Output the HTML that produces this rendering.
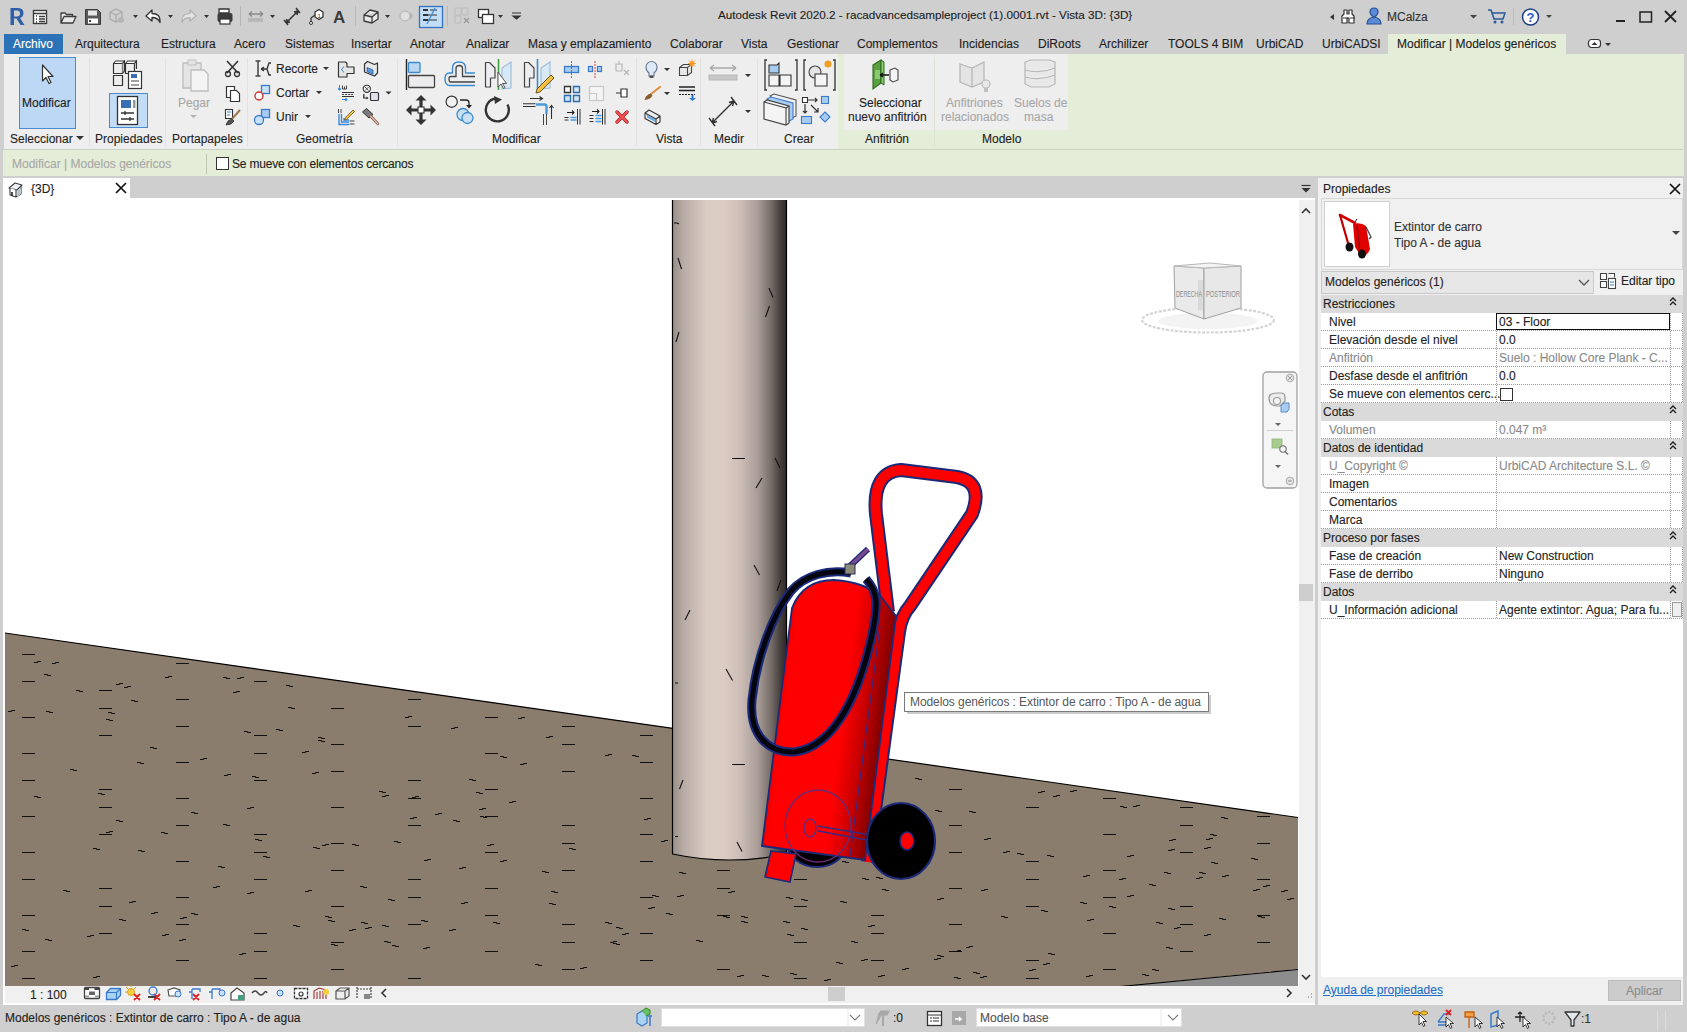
<!DOCTYPE html>
<html><head><meta charset="utf-8"><style>
*{margin:0;padding:0;box-sizing:border-box}
html,body{width:1687px;height:1032px;overflow:hidden}
body{position:relative;background:#CFCFCF;font-family:"Liberation Sans",sans-serif;font-size:12px;color:#1E1E1E}
.a{position:absolute}
.t{position:absolute;white-space:nowrap;line-height:14px;-webkit-text-stroke:0.12px currentColor}
svg{position:absolute;overflow:visible}
</style></head><body>
<!-- chrome backgrounds -->
<div class="a" style="left:4px;top:34px;width:59px;height:20px;background:#2B73B6"></div>
<div class="a" style="left:1388px;top:34px;width:178px;height:20px;background:#E4EDD7"></div>
<div class="a" style="left:4px;top:54px;width:1680px;height:96px;background:#E4EDD7"></div>
<div class="a" style="left:4px;top:54px;width:834px;height:95px;background:#EEEEEE"></div>
<div class="a" style="left:844px;top:54px;width:90px;height:76px;background:#EEEEEE"></div>
<div class="a" style="left:935px;top:54px;width:133px;height:76px;background:#EEEEEE"></div>
<div class="a" style="left:934px;top:58px;width:1px;height:88px;background:#DCE4D2"></div>
<div class="a" style="left:4px;top:149px;width:1679px;height:1px;background:#CAD3C0"></div>
<div class="a" style="left:3px;top:150px;width:1681px;height:26px;background:#E4EDD7"></div>
<div class="a" style="left:3px;top:178px;width:127px;height:21px;background:#FFFFFF"></div>
<div class="a" style="left:3px;top:198px;width:1315px;height:807px;background:#FFFFFF"></div>
<div class="a" style="left:1299px;top:200px;width:16px;height:786px;background:#F0F0F0"></div>
<div class="a" style="left:5px;top:986px;width:1310px;height:17px;background:#F0F0F0"></div>
<div class="a" style="left:1318px;top:178px;width:365px;height:827px;background:#F0F0F0"></div>
<!-- TITLE BAR -->
<div class="t" style="left:718px;top:8px;font-size:11.7px;color:#1E1E1E">Autodesk Revit 2020.2 - racadvancedsampleproject (1).0001.rvt - Vista 3D: {3D}</div>
<svg width="1687" height="32" style="left:0;top:0">
<!-- R logo -->
<path d="M10.5 8 h7 q6 0 6 5 q0 4 -3.5 5 l4.5 7 h-4 l-4 -6.5 h-2.5 v6.5 h-3.5 Z M14 10.5 v6 h3 q3 0 3 -3 q0 -3 -3 -3 Z" fill="#2F5FA8"/>
<!-- properties icon -->
<rect x="33.5" y="10.5" width="13" height="13" fill="#fff" stroke="#3C3C3C" stroke-width="1.4"/>
<path d="M34 13.5 h12 M37 16 h-1 M37 19 h-1 M37 22 h-1 M39 16.5 h6 M39 19 h6 M39 21.5 h6" stroke="#3C3C3C" stroke-width="1.3"/>
<!-- open folder -->
<path d="M61 23 v-10 h4 l1.5 1.5 h6 v2 M61 23 l3 -6.5 h12 l-3 6.5 Z" fill="#E8E8E8" stroke="#3C3C3C" stroke-width="1.3" stroke-linejoin="round"/>
<!-- save -->
<path d="M85.5 9.5 h12 l3 3 v12 h-15 Z" fill="#5A5A5A" stroke="#3C3C3C"/>
<rect x="88" y="10.5" width="9" height="5" fill="#E8E8E8"/>
<rect x="88" y="18.5" width="10" height="5" fill="#fff"/>
<rect x="89" y="20" width="2" height="2" fill="#3C3C3C"/>
<!-- sync (disabled) -->
<path d="M110 12 l6 -3 l6 3 v7 l-6 3 l-6 -3 Z M110 12 l6 3 l6 -3 M116 15 v7" fill="none" stroke="#AAAAAA" stroke-width="1.3"/>
<circle cx="121" cy="20" r="3" fill="#B5B5B5"/>
<path d="M133 15 h5 l-2.5 3 Z M168 15 h5 l-2.5 3 Z M204 15 h5 l-2.5 3 Z M270 15 h5 l-2.5 3 Z M385 15 h5 l-2.5 3 Z M498 15 h5 l-2.5 3 Z" fill="#333"/>
<!-- undo -->
<path d="M146 16 l6 -6 v3.5 q8 0 8 7 v2 q-2 -5 -8 -5 v3.5 Z" fill="#fff" stroke="#333" stroke-width="1.3" stroke-linejoin="round"/>
<!-- redo (disabled) -->
<path d="M196 16 l-6 -6 v3.5 q-8 0 -8 7 v2 q2 -5 8 -5 v3.5 Z" fill="#E4E4E4" stroke="#B0B0B0" stroke-width="1.2" stroke-linejoin="round"/>
<!-- print -->
<path d="M219 9 h10 v4 h-10 Z" fill="#fff" stroke="#333" stroke-width="1.3"/>
<rect x="217.5" y="13" width="15" height="9" rx="2" fill="#3C3C3C"/>
<rect x="220" y="19" width="10" height="5" fill="#fff" stroke="#333" stroke-width="1.2"/>
<path d="M240.5 6 v20 M355.5 6 v20 M447.5 6 v20" stroke="#B8B8B8"/>
<!-- measure -->
<path d="M249 14 h14 M249 14 l3 -2.5 M249 14 l3 2.5 M263 14 l-3 -2.5 M263 14 l-3 2.5" stroke="#8A8A8A" stroke-width="1.3" fill="none"/>
<rect x="248" y="18" width="15" height="4" fill="#B8B8B8"/>
<!-- aligned dim -->
<path d="M286 23 l12 -12 M286 23 l1 -4 M286 23 l4 -1 M298 11 l-4 1 M298 11 l-1 4 M284 20 l4 5 M296 8 l4 5" stroke="#333" stroke-width="1.5" fill="none"/>
<!-- tag -->
<path d="M311 23 v-5 l4 -3" stroke="#333" stroke-width="1.3" fill="none"/>
<circle cx="311" cy="23" r="1.5" fill="#fff" stroke="#333"/>
<path d="M315 12 l4 -2.5 l4 2.5 v5 l-4 2.5 l-4 -2.5 Z" fill="#fff" stroke="#333" stroke-width="1.3"/>
<text x="317.5" y="17.5" font-size="6" font-family="Liberation Sans" fill="#333">1</text>
<!-- A -->
<text x="333" y="23" font-size="17" font-weight="bold" font-family="Liberation Sans" fill="#3C3C3C">A</text>
<!-- house -->
<path d="M364 15 l6 -5 l8 2 v7 l-6 4 l-8 -2 Z M364 15 l8 2 l6 -5 M372 17 v6" fill="#E8E8E8" stroke="#3C3C3C" stroke-width="1.3" stroke-linejoin="round"/>
<!-- section -->
<circle cx="405" cy="16" r="5" fill="#E0E0E0" stroke="#B0B0B0"/>
<path d="M410 12 l3 4 l-3 4 Z" fill="#B0B0B0"/>
<!-- thin lines highlighted -->
<rect x="419.5" y="6.5" width="23" height="21" fill="#C2DDF7" stroke="#3573C0" stroke-width="1.3"/>
<path d="M423 10 h5 M423 15 h5 M423 20 h5" stroke="#333" stroke-width="2"/>
<path d="M430 10 h7 M428 15 h9 M427 20 h10" stroke="#333" stroke-width="1"/>
<path d="M427 24 l8 -16" stroke="#3A8CE0" stroke-width="1.3"/>
<!-- close hidden -->
<path d="M455 8 h6 v7 h-6 Z M462 8 h6 v7 h-6 Z M455 16 h6 v7 h-6 Z" fill="none" stroke="#BBBBBB"/>
<path d="M464 18 l5 5 M469 18 l-5 5" stroke="#9A9A9A" stroke-width="1.4"/>
<!-- switch windows -->
<rect x="478.5" y="9.5" width="10" height="8" fill="#fff" stroke="#333" stroke-width="1.3"/>
<rect x="482.5" y="14.5" width="11" height="9" fill="#fff" stroke="#333" stroke-width="1.3"/>
<path d="M512 13 h9 M513 16 h7 l-3.5 3 Z" stroke="#333" stroke-width="1.2" fill="#333"/>
<!-- right side -->
<path d="M1334 14 l-4 3 l4 3 Z" fill="#333"/>
<path d="M1344 10 h3 v4 h2 v-4 h3 v4 l2 2 v7 h-5 v-5 h-2 v5 h-5 v-7 l2 -2 Z" fill="#fff" stroke="#333" stroke-width="1.2" stroke-linejoin="round"/>
<path d="M1343 18 h5 M1350 18 h5" stroke="#333" stroke-width="1"/>
<path d="M1367 24 q0 -6 7 -7 q-4 -2 -4 -5 q0 -4 4 -4 q4 0 4 4 q0 3 -4 5 q7 1 7 7 Z" fill="#5B8BD8" stroke="#2A4E90" stroke-width="1.2"/>
<path d="M1470 15 h7 l-3.5 3.5 Z M1546 15 h6 l-3 3 Z" fill="#444"/>
<path d="M1488 10 h3 l3 9 h9 l2 -6 h-13" fill="none" stroke="#2A5A9A" stroke-width="1.5"/>
<circle cx="1495" cy="22" r="1.5" fill="#2A5A9A"/><circle cx="1502" cy="22" r="1.5" fill="#2A5A9A"/>
<path d="M1513.5 8 v17" stroke="#BBBBBB"/>
<circle cx="1530.5" cy="17" r="8" fill="#fff" stroke="#1E3E80" stroke-width="1.5"/>
<text x="1526.5" y="22" font-size="13" font-weight="bold" font-family="Liberation Sans" fill="#2A5AC0">?</text>
<path d="M1616 21 h9" stroke="#222" stroke-width="2"/>
<rect x="1640" y="12" width="11.5" height="10" fill="none" stroke="#222" stroke-width="1.5"/>
<path d="M1665 11 l11 11 M1676 11 l-11 11" stroke="#222" stroke-width="1.8"/>
</svg>
<div class="t" style="left:1387px;top:10px;color:#333">MCalza</div>
<!-- TABS -->
<div class="t" style="left:13px;top:37px;color:#fff">Archivo</div>
<div class="t" style="left:75px;top:37px">Arquitectura</div>
<div class="t" style="left:161px;top:37px">Estructura</div>
<div class="t" style="left:234px;top:37px">Acero</div>
<div class="t" style="left:285px;top:37px">Sistemas</div>
<div class="t" style="left:351px;top:37px">Insertar</div>
<div class="t" style="left:410px;top:37px">Anotar</div>
<div class="t" style="left:466px;top:37px">Analizar</div>
<div class="t" style="left:528px;top:37px">Masa y emplazamiento</div>
<div class="t" style="left:670px;top:37px">Colaborar</div>
<div class="t" style="left:741px;top:37px">Vista</div>
<div class="t" style="left:787px;top:37px">Gestionar</div>
<div class="t" style="left:857px;top:37px">Complementos</div>
<div class="t" style="left:959px;top:37px">Incidencias</div>
<div class="t" style="left:1038px;top:37px">DiRoots</div>
<div class="t" style="left:1099px;top:37px">Archilizer</div>
<div class="t" style="left:1168px;top:37px">TOOLS 4 BIM</div>
<div class="t" style="left:1256px;top:37px">UrbiCAD</div>
<div class="t" style="left:1322px;top:37px">UrbiCADSI</div>
<div class="t" style="left:1397px;top:37px">Modificar | Modelos genéricos</div>
<svg width="40" height="20" style="left:1580px;top:34px">
<rect x="8.5" y="5.5" width="12" height="8" rx="3" fill="#fff" stroke="#333" stroke-width="1.2"/>
<path d="M11.5 11 l3 -3 l3 3 Z M25 9 h6 l-3 3 Z" fill="#333"/>
</svg>
<!-- RIBBON -->
<div class="a" style="left:19px;top:57px;width:57px;height:72px;background:#BCD8F4;border:1px solid #4A8BD0"></div>
<div class="a" style="left:109px;top:93px;width:39px;height:35px;background:#C4DDF6;border:1px solid #4A8BD0"></div>
<div class="t" style="left:22px;top:96px">Modificar</div>
<div class="t" style="left:10px;top:132px">Seleccionar</div>
<div class="t" style="left:95px;top:132px">Propiedades</div>
<div class="t" style="left:178px;top:96px;color:#A8A8A8">Pegar</div>
<div class="t" style="left:172px;top:132px">Portapapeles</div>
<div class="t" style="left:276px;top:62px">Recorte</div>
<div class="t" style="left:276px;top:86px">Cortar</div>
<div class="t" style="left:276px;top:110px">Unir</div>
<div class="t" style="left:296px;top:132px">Geometría</div>
<div class="t" style="left:492px;top:132px">Modificar</div>
<div class="t" style="left:656px;top:132px">Vista</div>
<div class="t" style="left:714px;top:132px">Medir</div>
<div class="t" style="left:784px;top:132px">Crear</div>
<div class="t" style="left:859px;top:96px">Seleccionar</div>
<div class="t" style="left:848px;top:110px">nuevo anfitrión</div>
<div class="t" style="left:865px;top:132px">Anfitrión</div>
<div class="t" style="left:946px;top:96px;color:#A8A8A8">Anfitriones</div>
<div class="t" style="left:941px;top:110px;color:#A8A8A8">relacionados</div>
<div class="t" style="left:1014px;top:96px;color:#A8A8A8">Suelos de</div>
<div class="t" style="left:1024px;top:110px;color:#A8A8A8">masa</div>
<div class="t" style="left:982px;top:132px">Modelo</div>
<svg width="1687" height="180" style="left:0;top:0">
<!-- panel separators -->
<path d="M89.5 58 v88 M165.5 58 v88 M247.5 58 v88 M397.5 58 v88 M636.5 58 v88 M700.5 58 v88 M757.5 58 v88" stroke="#E2E2E2" stroke-width="1"/>
<path d="M76 136 h8 l-4 4 Z" fill="#333"/>
<!-- cursor -->
<path d="M42.5 65 v16 l3.5 -3.5 l3 6 l2 -1 l-3 -6 h5 Z" fill="#fff" stroke="#333" stroke-width="1.2" stroke-linejoin="round"/>
<!-- type properties icon -->
<path d="M113.5 63.5 l2 -2.5 h9 l-2 2.5 Z M125.5 63.5 l2 -2.5 h9 l-2 2.5 Z" fill="#FFFFFF" stroke="#333" stroke-width="1.1" stroke-linejoin="round"/>
<path d="M113.5 63.5 h9 v10 h-9 Z M125.5 63.5 h9 v10 h-9 Z M113.5 75.5 h9 v10 h-9 Z" fill="#EDEDED" stroke="#333" stroke-width="1.2" stroke-linejoin="round"/>
<path d="M122.5 63.5 l2 -2.5 v10 l-2 2.5 M134.5 63.5 l2 -2.5 v8" fill="#C8C8C8" stroke="#333" stroke-width="1.1"/>
<rect x="128.5" y="71.5" width="13" height="17" fill="#fff" stroke="#333" stroke-width="1.2"/>
<rect x="131" y="74" width="6" height="4" fill="#3A6EB0"/>
<path d="M131 81 h8 M131 85 h8" stroke="#444" stroke-width="1"/>
<!-- instance properties -->
<rect x="117.5" y="96.5" width="20" height="28" fill="#fff" stroke="#333" stroke-width="1.3"/>
<rect x="121" y="100" width="10" height="8" fill="#3A6EB0"/>
<rect x="133" y="100" width="2.5" height="8" fill="#999"/>
<path d="M121 113 h13 M121 119 h13 M125 111 v4 M130 117 v4" stroke="#333" stroke-width="1.3"/>
<!-- paste disabled -->
<path d="M183 63 h18 v25 h-18 Z" fill="#E4E4E4" stroke="#BDBDBD" stroke-width="1.3"/>
<path d="M188 60 h8 v5 h-8 Z" fill="#E4E4E4" stroke="#BDBDBD"/>
<path d="M191 70 h13 l4 4 v17 h-17 Z" fill="#F4F4F4" stroke="#BDBDBD" stroke-width="1.3"/>
<path d="M190 115 h7 l-3.5 3 Z" fill="#B0B0B0"/>
<!-- cut copy match -->
<path d="M227 61 l11 12 M238 61 l-11 12" stroke="#333" stroke-width="1.6"/>
<circle cx="228" cy="74" r="2.5" fill="none" stroke="#333" stroke-width="1.3"/><circle cx="237" cy="74" r="2.5" fill="none" stroke="#333" stroke-width="1.3"/>
<path d="M226.5 86.5 h8 v11 h-8 Z" fill="#fff" stroke="#333" stroke-width="1.2"/>
<path d="M230.5 90.5 h6 l3 3 v8 h-9 Z" fill="#fff" stroke="#333" stroke-width="1.2"/>
<rect x="225.5" y="109.5" width="7" height="9" fill="#fff" stroke="#333" stroke-width="1.1"/>
<path d="M227 112 h4 M227 115 h3" stroke="#3A7ACB" stroke-width="1"/>
<path d="M232 119 l8 -9" stroke="#A07850" stroke-width="2"/>
<path d="M226 125 q1 -5 6 -6 l2 2 q-2 4 -8 4 Z" fill="#555" stroke="#333" stroke-width="0.8"/>
<!-- Geometria icons -->
<path d="M255.5 61 h5 M255.5 76 h5 M258 61 v15" stroke="#444" stroke-width="1.5" fill="none"/>
<path d="M261 69 h6 l2 -6 h2 M267 69 l2 6 h2 M261 69 l3 -2 M261 69 l3 2" stroke="#333" stroke-width="1.3" fill="none"/>
<path d="M323 67 h6 l-3 3 Z M316 91 h6 l-3 3 Z M305 115 h6 l-3 3 Z" fill="#333"/>
<rect x="261.5" y="85.5" width="8" height="8" fill="#C8E0F8" stroke="#3A7ACB" stroke-width="1.3"/>
<circle cx="259" cy="96" r="4" fill="#fff" stroke="#D03030" stroke-width="1.4"/>
<rect x="261.5" y="109.5" width="8" height="8" fill="#A8CCF0" stroke="#3A7ACB" stroke-width="1.3"/>
<circle cx="259" cy="120" r="4.5" fill="#C8E0F8" stroke="#3A7ACB" stroke-width="1.3"/>
<path d="M338.5 62 h7 l1.5 1.5 v3.5 h7 v6.5 h-7 v3.5 h-8.5 Z" fill="#E6E6E6" stroke="#333" stroke-width="1.2" stroke-linejoin="round"/>
<path d="M344 66.5 l-2.5 3 l2.5 3" stroke="#5A9AD0" stroke-width="1.1" fill="none"/>
<path d="M364.5 64 l3 -2.5 l7 3 l3 -1.5 v10 l-3 3 l-10 -4 Z" fill="#E8E8E8" stroke="#333" stroke-width="1.2" stroke-linejoin="round"/>
<path d="M367 67.5 l6 2.5 v4 l-6 -2.5 Z" fill="#5A9AE0" stroke="#2A5AA0" stroke-width="0.8"/>
<path d="M339.5 85 v5 M338 88.5 l1.5 1.5 l1.5 -1.5" stroke="#3A8AE0" stroke-width="1.1" fill="none"/>
<path d="M342.5 85.5 v3.5 h4 v-3.5 M344.5 86.5 v2.5" stroke="#333" stroke-width="0.9" fill="none"/>
<path d="M342 92.5 h12 M342 96.5 h12" stroke="#333" stroke-width="1.1"/>
<path d="M342 94.5 h12" stroke="#333" stroke-width="0.9" stroke-dasharray="2 1"/>
<path d="M342 99.5 h5 M345.5 98 l1.5 1.5 l-1.5 1.5" stroke="#3A8AE0" stroke-width="1.1" fill="none"/>
<circle cx="366.8" cy="88.8" r="3.6" fill="#F4F4F4" stroke="#333" stroke-width="1.1"/>
<path d="M365 87 l3.6 3.6 M368.6 87 l-3.6 3.6" stroke="#333" stroke-width="0.8"/>
<path d="M363.8 94 v4 h3" stroke="#222" stroke-width="1.2" fill="none"/>
<path d="M366.5 96.5 l2 1.5 l-2 1.5 Z" fill="#222"/>
<rect x="370.5" y="92.5" width="8" height="8" rx="1" fill="#E0E0E6" stroke="#333" stroke-width="1.1"/>
<path d="M338.5 109 v4 M341 109 v4" stroke="#444" stroke-width="1"/>
<path d="M339 114 v10.5 h10 M341.5 114 v8 h7.5 M344 118 v2 h5" stroke="#3A8AE0" stroke-width="1.4" fill="none"/>
<path d="M349.5 121 h5 M349.5 124 h5" stroke="#444" stroke-width="1"/>
<path d="M345 118 l8 -8 l1.5 1.5 l-8 8 l-2 0.5 Z" fill="#F4C040" stroke="#6A5020" stroke-width="0.8"/>
<path d="M362.5 112 l4 -3.5 l6.5 6 l-4 3.5 Z" fill="#7A7A80" stroke="#333" stroke-width="1"/>
<path d="M370.5 116 l7.5 8" stroke="#7A5A50" stroke-width="2.6" stroke-linecap="round"/>
<path d="M370.5 116 l7.5 8" stroke="#E8B8A8" stroke-width="1.2" stroke-linecap="round"/>
<path d="M385.5 91.5 h6 l-3 3 Z" fill="#333"/>
<!-- Modificar panel big icons -->
<path d="M406.5 59 v31" stroke="#222" stroke-width="1.4"/>
<rect x="408.5" y="62.5" width="11.5" height="10" rx="1" fill="#BCD8EE" stroke="#3A8AD0" stroke-width="1.3"/>
<rect x="408.5" y="75.5" width="26" height="12" rx="1" fill="#ECECEE" stroke="#444" stroke-width="1.3"/>
<path d="M475 73 h-9.5 v-5 q0 -6 -6.5 -6 q-6.5 0 -6.5 6 v5 h-3 q-4.5 0 -4.5 6 q0 6.5 5 6.5 h25" fill="none" stroke="#3A8AD0" stroke-width="1.4"/>
<path d="M475 76.5 h-12.5 v-8 q0 -3 -3 -3 q-3.5 0 -3.5 3 v8 h-5.5 q-1.5 0 -1.5 2.5 q0 3 1.5 3 h24.5" fill="none" stroke="#444" stroke-width="1.3"/>
<path d="M485.5 62.5 h4 l5.5 5.5 v10 h-4.5 v9 h-5 Z" fill="#EEEEF2" stroke="#444" stroke-width="1.2" stroke-linejoin="round"/>
<path d="M498.5 59 v31" stroke="#40A040" stroke-width="1.6"/>
<path d="M502 68 l9 -6 v26 l-9 1 Z" fill="#D8E8F4" stroke="#9ABCD8" stroke-width="1.1"/>
<path d="M498 72 v15 l3 -3 l2.5 4.5 l1.5 -1 l-2.5 -4 h4 Z" fill="#fff" stroke="#444" stroke-width="0.9"/>
<path d="M524.5 62.5 h4 l5.5 5.5 v10 h-4.5 v9 h-5 Z" fill="#EEEEF2" stroke="#444" stroke-width="1.2" stroke-linejoin="round"/>
<path d="M537.5 59 v31" stroke="#3A8AD0" stroke-width="1.6"/>
<path d="M541 68 l9 -6 v26 l-9 1 Z" fill="#D8E8F4" stroke="#9ABCD8" stroke-width="1.1"/>
<path d="M537 89 l14 -14 l3 3 l-14 14 l-4 1 Z" fill="#F4C040" stroke="#6A5020" stroke-width="1"/>
<path d="M421 99 v21 M410 110 h22" stroke="#333" stroke-width="3.2"/>
<path d="M421 95 l-5.5 5.5 h11 Z M421 125 l-5.5 -5.5 h11 Z M406 110 l5.5 -5.5 v11 Z M436 110 l-5.5 -5.5 v11 Z" fill="#333"/>
<rect x="418" y="107" width="6" height="6" fill="#fff" stroke="#333" stroke-width="1.1"/>
<circle cx="451.7" cy="101.7" r="5.6" fill="#F2F2F2" stroke="#333" stroke-width="1.2"/>
<path d="M460 100 h6 q3 0 3 3 v3" stroke="#222" stroke-width="1.3" fill="none"/>
<path d="M466 105 l3 3.5 l3 -3.5 Z" fill="#222"/>
<circle cx="463" cy="114.5" r="6" fill="#C8E0F0" stroke="#3A8AD0" stroke-width="1.3"/>
<circle cx="467.5" cy="118" r="5.5" fill="#C8E0F0" stroke="#3A8AD0" stroke-width="1.3"/>
<path d="M507.5 104.5 a11.5 11.5 0 1 1 -12 -6" fill="none" stroke="#333" stroke-width="2.4"/>
<path d="M494 96 l8 3.5 l-7 4.5 Z" fill="#333"/>
<path d="M523 103.8 h12.5 M523 106.5 h12.5 M530 98.5 h12 M539.5 96.5 l3 2 l-3 2" stroke="#333" stroke-width="1.1" fill="none"/>
<path d="M536 104.5 h8.5 q2 0 2 2 v7.5" stroke="#4A9AE0" stroke-width="2.4" fill="none"/>
<path d="M543.5 114 v11 M546.5 114 v11" stroke="#333" stroke-width="0.9"/>
<path d="M551.5 119 v-13 M549.5 108 l2 -2.5 l2 2.5" stroke="#333" stroke-width="1.1" fill="none"/>
<!-- Modificar small icons -->
<rect x="564.5" y="66.5" width="14" height="6" fill="#A8CCF0" stroke="#3A7ACB" stroke-width="1.3"/>
<path d="M571.5 61 v17" stroke="#E04040" stroke-width="1" stroke-dasharray="2 1"/>
<rect x="588.5" y="66.5" width="4" height="5" fill="#A8CCF0" stroke="#3A7ACB" stroke-width="1.2"/>
<rect x="597.5" y="66.5" width="4" height="5" fill="#A8CCF0" stroke="#3A7ACB" stroke-width="1.2"/>
<path d="M595 61 v17" stroke="#E04040" stroke-width="1" stroke-dasharray="2 1"/>
<path d="M616 64 h6 v7 h-6 Z M619 61 v4" stroke="#B8B8B8" stroke-width="1.2" fill="none"/>
<path d="M624 70 l5 5 M629 70 l-5 5" stroke="#B8B8B8" stroke-width="1.3"/>
<path d="M573.5 86.5 h6 v6 h-6 Z M564.5 95.5 h6 v6 h-6 Z M573.5 95.5 h6 v6 h-6 Z" fill="#D4E6F4" stroke="#2A6AB0" stroke-width="1.3"/><path d="M564.5 86.5 h6 v6 h-6 Z" fill="#fff" stroke="#333" stroke-width="1.3"/>
<rect x="589.5" y="86.5" width="14" height="14" fill="#F4F4F4" stroke="#C8C8C8" stroke-width="1.2"/>
<path d="M589.5 93.5 h7 v7" stroke="#C8C8C8" stroke-width="1.2" fill="none"/>
<path d="M616 93 h5 M621 89 v8 h6 v-8 Z" stroke="#333" stroke-width="1.2" fill="#fff"/>
<path d="M567 112.5 h7 M572 110.5 l2 2 l-2 2" stroke="#222" stroke-width="1.1" fill="none"/>
<path d="M564.5 117.5 h4 M564.5 120 h4" stroke="#333" stroke-width="1"/>
<path d="M570.5 117.5 h6 M570.5 120 h6" stroke="#4A9AE0" stroke-width="1.3"/>
<path d="M577.5 109 v15.5 M580 109 v15.5" stroke="#333" stroke-width="1"/>
<path d="M592 111.5 h7 M597 109.5 l2 2 l-2 2" stroke="#222" stroke-width="1.1" fill="none"/>
<path d="M589.5 115.5 h4 M589.5 118.5 h4 M589.5 121.5 h4" stroke="#333" stroke-width="1"/>
<path d="M595.5 115.5 h6 M595.5 118.5 h6 M595.5 121.5 h6" stroke="#4A9AE0" stroke-width="1.3"/>
<path d="M602.5 109 v15.5 M605 109 v15.5" stroke="#333" stroke-width="1"/>
<path d="M617 112 l10 10 M627 112 l-10 10" stroke="#9A2020" stroke-width="3.4" stroke-linecap="round"/><path d="M617 112 l10 10 M627 112 l-10 10" stroke="#F45050" stroke-width="2.2" stroke-linecap="round"/>
<!-- Vista panel -->
<path d="M649 76 v-3 q-3 -2 -3 -6 a5.5 5.5 0 0 1 11 0 q0 4 -3 6 v3 Z" fill="#DCEAF8" stroke="#6A7A90" stroke-width="1.1"/>
<rect x="649.5" y="75.5" width="4" height="2.5" fill="#555"/>
<path d="M664 68 h6 l-3 3 Z M664 92 h6 l-3 3 Z" fill="#333"/>
<path d="M679.5 67.5 l4 -3 h8 v8 l-4 3 h-8 Z M679.5 67.5 h8 l4 -3 M687.5 67.5 v8" fill="#E8E8E8" stroke="#444" stroke-width="1.1"/>
<circle cx="692" cy="63.5" r="2.5" fill="#F8B030"/>
<path d="M692 59.5 v8 M688 63.5 h8 M689 60.5 l6 6 M695 60.5 l-6 6" stroke="#F89020" stroke-width="0.8"/>
<path d="M651 94 l9 -7" stroke="#E09040" stroke-width="2.2" stroke-linecap="round"/>
<path d="M644.5 100 q1 -5 6 -6.5 l2 2 q-2 4 -8 4.5 Z" fill="#8A5A2A"/>
<path d="M679 87 h16 M679 90.5 h16" stroke="#222" stroke-width="1.6"/>
<path d="M679 94.5 h16" stroke="#222" stroke-width="1" stroke-dasharray="2 1"/>
<path d="M691.5 95 v3 h-2.5 l3.5 3 l3.5 -3 h-2.5 v-3 Z" fill="#2A7AD0"/>
<path d="M645 113 l4 -3 l11 6 v6 l-4 2.5 l-11 -6 Z M645 113 l11 6 l4 -3 M656 119 v5.5" fill="#F0F0F0" stroke="#333" stroke-width="1.1" stroke-linejoin="round"/>
<path d="M647 114.5 l8 4.5 v3 l-8 -4.5 Z" fill="#6AA8E0"/>
<!-- Medir -->
<path d="M710 68 h26 M710 68 l4 -3 M710 68 l4 3 M736 68 l-4 -3 M736 68 l-4 3" stroke="#A8A8A8" stroke-width="1.3" fill="none"/>
<rect x="709" y="75" width="28" height="5" fill="#C8C8C8" stroke="#B8B8B8"/>
<path d="M745 74 h6 l-3 3 Z M745 110 h6 l-3 3 Z" fill="#333"/>
<path d="M712 123 l22 -22 M709 118 l6 8 M731 97 l6 8 M712 123 l1.5 -5 M712 123 l5 -1.5 M734 101 l-5 1.5 M734 101 l-1.5 5" stroke="#333" stroke-width="1.4" fill="none"/>
<!-- Crear -->
<path d="M767 60 h-2 v30 h2 M795 60 h2 v30 h-2" stroke="#333" stroke-width="1.3" fill="none"/>
<path d="M769 65 h8 l2 -2 v10 h-10 Z" fill="#A8CCF0" stroke="#333" stroke-width="1.1"/>
<path d="M769 75 h10 v11 h-10 Z M780 75 h11 v11 h-11 Z" fill="#F4F4F4" stroke="#333" stroke-width="1.1"/>
<path d="M806 60 h-2 v30 h2 M833 60 h2 v30 h-2" stroke="#333" stroke-width="1.3" fill="none"/>
<circle cx="815" cy="72" r="6" fill="#E4E4E4" stroke="#444" stroke-width="1.1"/>
<path d="M815 74 h12 v12 h-12 Z" fill="#F4F4F4" stroke="#333" stroke-width="1.1"/>
<circle cx="828" cy="64" r="3.5" fill="#F0A020"/>
<path d="M770 96 l4 -2 l22 6 v16 l-4 2 Z" fill="#F0F0F0" stroke="#555" stroke-width="1.1"/>
<path d="M767 99 l4 -2 l22 6 v16 l-4 2 Z" fill="#A8CCF0" stroke="#3A7ACB" stroke-width="1.1"/>
<path d="M764 102 l3 -2 l22 6 v17 l-3 2 l-22 -6 Z" fill="#F4F4F4" stroke="#444" stroke-width="1.2"/>
<path d="M764 102 l22 6 v17 M786 108 l3 -2" stroke="#444" stroke-width="1.1" fill="none"/>
<path d="M802.5 97.5 h5 v5 h-5 Z" fill="#fff" stroke="#333" stroke-width="1.1"/>
<path d="M808 100 h9 M815 98 l2 2 l-2 2 M805 104 v9 M803 111 l2 2 l2 -2 M811 105 l7 7 M818 108 v4 h-4" stroke="#333" stroke-width="1.2" fill="none"/>
<rect x="821.5" y="96.5" width="7" height="7" fill="#A8CCF0" stroke="#3A7ACB" stroke-width="1.1"/>
<rect x="801.5" y="116.5" width="10" height="7" fill="#A8CCF0" stroke="#3A7ACB" stroke-width="1.1"/>
<path d="M825 112 l5 5 l-5 5 l-5 -5 Z" fill="#A8CCF0" stroke="#3A7ACB" stroke-width="1.1"/>
<!-- Anfitrion icon -->
<path d="M873 65 l8 -5 v23 l-8 6 Z" fill="#5AA040" stroke="#2E6A20" stroke-width="1.1"/>
<path d="M881 60 l3 2 v23 l-3 -2 Z" fill="#8ACB70" stroke="#2E6A20" stroke-width="1"/>
<rect x="875" y="70" width="5" height="9" fill="#8ACB70"/>
<path d="M880 75 h9 M880 75 l3 -2 M880 75 l3 2" stroke="#111" stroke-width="1.3" fill="none"/>
<path d="M890 70 l5 -2 l3 2 v10 l-5 2 l-3 -2 Z" fill="#F4F4F4" stroke="#444" stroke-width="1.1"/>
<!-- Modelo disabled icons -->
<path d="M960 64 l12 4 l12 -6 v20 l-12 5 l-12 -5 Z M972 68 v19" fill="#E4E4E4" stroke="#B8B8B8" stroke-width="1.3"/>
<circle cx="986" cy="84" r="4" fill="#E8E8E8" stroke="#B8B8B8" stroke-width="1.2"/>
<path d="M984 88 h4 v4 h-4 Z" fill="#C0C0C0"/>
<path d="M1025 62 l6 -2 h18 l6 2 v22 l-6 3 h-18 l-6 -3 Z M1025 70 q15 4 30 -2 M1025 77 q15 4 30 -2" fill="#E8E8E8" stroke="#B8B8B8" stroke-width="1.2"/>
</svg>
<!-- OPTIONS BAR -->
<div class="t" style="left:12px;top:157px;color:#A8A8A8">Modificar | Modelos genéricos</div>
<div class="a" style="left:206px;top:154px;width:1px;height:20px;background:#BFC7B5"></div>
<div class="a" style="left:216px;top:157px;width:13px;height:13px;background:#fff;border:1px solid #333"></div>
<div class="t" style="left:232px;top:157px;letter-spacing:-0.2px">Se mueve con elementos cercanos</div>
<!-- VIEW TAB BAR -->
<svg width="140" height="24" style="left:0;top:178px">
<path d="M9 10 l6 -5 l7 2 l-5 5 Z" fill="#EEF2F8" stroke="#3C3C3C" stroke-width="1.1" stroke-linejoin="round"/>
<path d="M10 10 v7 l6 2 v-7 M16 19 l5 -3 v-8" fill="#FFFFFF" stroke="#3C3C3C" stroke-width="1.1" stroke-linejoin="round"/>
<path d="M17 13 l4 -3 v6 l-4 3 Z" fill="#B8C4D0"/>
<path d="M12 18 v-4" stroke="#222" stroke-width="1.6"/>
<path d="M116 5 l10 10 M126 5 l-10 10" stroke="#111" stroke-width="1.7"/>
</svg>
<div class="t" style="left:31px;top:182px">{3D}</div>
<svg width="20" height="20" style="left:1298px;top:180px">
<path d="M3.5 5.5 h9" stroke="#333" stroke-width="1.2"/><path d="M3.5 8 h9 l-4.5 4.5 Z" fill="#333"/>
</svg>
<!-- scrollbar arrows -->
<svg width="20" height="800" style="left:1298px;top:200px">
<path d="M4 13 l4 -4 l4 4" stroke="#333" stroke-width="1.6" fill="none"/>
<path d="M4 775 l4 4 l4 -4" stroke="#333" stroke-width="1.6" fill="none"/>
<rect x="1" y="384" width="14" height="17" fill="#CDCDCD"/>
<path d="M10 797 h1 M13 797 h1 M13 794 h1" stroke="#999" stroke-width="1.5"/>
</svg>
<svg width="1687" height="1032" style="left:0;top:0" viewBox="0 0 1687 1032">
<defs>
<clipPath id="vc"><rect x="5" y="200" width="1293" height="786"/></clipPath>
<linearGradient id="colg" x1="672" x2="787" y1="0" y2="0" gradientUnits="userSpaceOnUse">
<stop offset="0" stop-color="#968B86"/><stop offset="0.1" stop-color="#B9ACA6"/><stop offset="0.3" stop-color="#DACBC3"/><stop offset="0.45" stop-color="#DCCCC4"/><stop offset="0.6" stop-color="#CBBCB5"/><stop offset="0.75" stop-color="#A89B96"/><stop offset="0.86" stop-color="#776E69"/><stop offset="0.94" stop-color="#46403D"/><stop offset="1" stop-color="#2A2624"/>
</linearGradient>
<linearGradient id="bodyg" x1="790" x2="900" y1="0" y2="0" gradientUnits="userSpaceOnUse">
<stop offset="0" stop-color="#E00000"/><stop offset="0.15" stop-color="#FF0000"/><stop offset="0.6" stop-color="#FF0000"/><stop offset="0.8" stop-color="#C00000"/><stop offset="1" stop-color="#E80000"/>
</linearGradient>
</defs>
<g clip-path="url(#vc)">
<rect x="5" y="200" width="1293" height="786" fill="#fff"/>
<polygon points="0,632.3 1298,817.5 1298,969 1127,986 0,986" fill="#8B7D6D"/>
<polygon points="1127,986 1300,969 1300,990" fill="#8C8C8C"/>
<path d="M0 632.3 L1298 817.5 M1120 986.5 L1298 969.5" stroke="#000" stroke-width="1.2" fill="none"/>
<path d="M22 654.5h13 M22 681.5h13 M22 717.5h13 M22 753.5h13 M22 780.5h13 M22 816.5h13 M22 852.5h13 M22 879.5h13 M22 915.5h13 M22 951.5h13 M22 978.5h13 M99 690.5h13 M99 708.5h13 M99 735.5h13 M99 789.5h13 M99 807.5h13 M99 834.5h13 M99 888.5h13 M99 906.5h13 M99 933.5h13 M176 663.5h13 M176 699.5h13 M176 726.5h13 M176 762.5h13 M176 798.5h13 M176 825.5h13 M176 861.5h13 M176 897.5h13 M176 924.5h13 M176 960.5h13 M254 681.5h13 M254 735.5h13 M254 753.5h13 M254 780.5h13 M254 834.5h13 M254 852.5h13 M254 879.5h13 M254 933.5h13 M254 951.5h13 M254 978.5h13 M331 708.5h13 M331 744.5h13 M331 771.5h13 M331 807.5h13 M331 843.5h13 M331 870.5h13 M331 906.5h13 M331 942.5h13 M331 969.5h13 M408 699.5h13 M408 726.5h13 M408 780.5h13 M408 798.5h13 M408 825.5h13 M408 879.5h13 M408 897.5h13 M408 924.5h13 M408 978.5h13 M485 717.5h13 M485 753.5h13 M485 789.5h13 M485 816.5h13 M485 852.5h13 M485 888.5h13 M485 915.5h13 M485 951.5h13 M562 726.5h13 M562 744.5h13 M562 771.5h13 M562 825.5h13 M562 843.5h13 M562 870.5h13 M562 924.5h13 M562 942.5h13 M562 969.5h13 M640 735.5h13 M640 762.5h13 M640 798.5h13 M640 834.5h13 M640 861.5h13 M640 897.5h13 M640 933.5h13 M640 960.5h13 M717 870.5h13 M717 888.5h13 M717 915.5h13 M717 969.5h13 M794 780.5h13 M794 807.5h13 M794 843.5h13 M794 879.5h13 M794 906.5h13 M794 942.5h13 M794 978.5h13 M871 762.5h13 M871 816.5h13 M871 834.5h13 M871 861.5h13 M871 915.5h13 M871 933.5h13 M871 960.5h13 M949 789.5h13 M949 825.5h13 M949 852.5h13 M949 888.5h13 M949 924.5h13 M949 951.5h13 M1026 807.5h13 M1026 861.5h13 M1026 879.5h13 M1026 906.5h13 M1026 960.5h13 M1026 978.5h13 M1103 798.5h13 M1103 834.5h13 M1103 870.5h13 M1103 897.5h13 M1103 933.5h13 M1103 969.5h13 M1180 807.5h13 M1180 825.5h13 M1180 852.5h13 M1180 906.5h13 M1180 924.5h13 M1180 951.5h13 M1257 816.5h13 M1257 843.5h13 M1257 879.5h13 M1257 915.5h13 M1257 942.5h13 M313 847.5h3l1 1h3 M786 897.5h3l1 1h3 M22 929.5h3l1 1h3 M613 943.5h3l1 1h3 M831 790.5h3l1 -1h3 M1127 896.5h3l1 -1h3 M873 775.5h3l1 -1h3 M45 939.5h3l1 1h3 M934 959.5h3l1 -1h3 M1196 878.5h3l1 -1h3 M580 968.5h3l1 -1h3 M131 700.5h3l1 1h3 M1253 890.5h3l1 -1h3 M394 841.5h3l1 1h3 M459 868.5h3l1 -1h3 M1174 928.5h3l1 -1h3 M873 798.5h3l1 -1h3 M741 916.5h3l1 1h3 M1080 902.5h3l1 1h3 M87 936.5h3l1 -1h3 M119 919.5h3l1 1h3 M200 759.5h3l1 -1h3 M1133 806.5h3l1 -1h3 M63 890.5h3l1 1h3 M405 717.5h3l1 -1h3 M46 711.5h3l1 1h3 M794 787.5h3l1 1h3 M1127 856.5h3l1 -1h3 M1164 872.5h3l1 1h3 M677 896.5h3l1 -1h3 M728 892.5h3l1 -1h3 M661 841.5h3l1 -1h3 M312 773.5h3l1 -1h3 M679 872.5h3l1 1h3 M542 871.5h3l1 1h3 M801 899.5h3l1 1h3 M816 861.5h3l1 -1h3 M461 903.5h3l1 -1h3 M34 662.5h3l1 -1h3 M1251 858.5h3l1 1h3 M476 792.5h3l1 1h3 M493 922.5h3l1 1h3 M741 921.5h3l1 1h3 M293 925.5h3l1 1h3 M247 808.5h3l1 -1h3 M137 762.5h3l1 1h3 M1083 876.5h3l1 -1h3 M224 775.5h3l1 -1h3 M1149 884.5h3l1 1h3 M161 832.5h3l1 1h3 M1048 953.5h3l1 1h3 M365 928.5h3l1 -1h3 M1047 855.5h3l1 1h3 M382 925.5h3l1 1h3 M453 820.5h3l1 1h3 M535 964.5h3l1 1h3 M11 966.5h3l1 -1h3 M1281 891.5h3l1 -1h3 M1204 848.5h3l1 -1h3 M1087 920.5h3l1 -1h3 M379 791.5h3l1 1h3 M93 848.5h3l1 1h3 M1053 796.5h3l1 -1h3 M902 969.5h3l1 -1h3 M1168 908.5h3l1 1h3 M969 811.5h3l1 1h3 M862 878.5h3l1 1h3 M1219 918.5h3l1 1h3 M331 944.5h3l1 1h3 M1017 853.5h3l1 1h3 M696 940.5h3l1 1h3 M1029 970.5h3l1 -1h3 M1070 791.5h3l1 -1h3 M1120 806.5h3l1 1h3 M352 844.5h3l1 1h3 M616 927.5h3l1 1h3 M76 690.5h3l1 1h3 M93 977.5h3l1 -1h3 M116 820.5h3l1 1h3 M412 797.5h3l1 -1h3 M252 776.5h3l1 1h3 M723 916.5h3l1 1h3 M108 712.5h3l1 1h3 M787 934.5h3l1 1h3 M1041 910.5h3l1 1h3 M487 845.5h3l1 -1h3 M549 903.5h3l1 1h3 M322 845.5h3l1 -1h3 M98 793.5h3l1 1h3 M1142 974.5h3l1 1h3 M1166 947.5h3l1 1h3 M605 755.5h3l1 -1h3 M861 960.5h3l1 -1h3 M868 926.5h3l1 -1h3 M138 850.5h3l1 1h3 M191 913.5h3l1 1h3 M124 687.5h3l1 -1h3 M237 678.5h3l1 -1h3 M162 935.5h3l1 -1h3 M1086 976.5h3l1 -1h3 M1038 792.5h3l1 -1h3 M666 913.5h3l1 1h3 M973 972.5h3l1 1h3 M424 860.5h3l1 -1h3 M318 737.5h3l1 1h3 M801 928.5h3l1 1h3 M480 816.5h3l1 1h3 M546 737.5h3l1 -1h3 M1263 886.5h3l1 -1h3 M213 887.5h3l1 -1h3 M876 877.5h3l1 1h3 M836 962.5h3l1 1h3 M129 902.5h3l1 -1h3 M935 810.5h3l1 1h3 M263 856.5h3l1 1h3 M305 891.5h3l1 -1h3 M388 899.5h3l1 1h3 M1109 906.5h3l1 1h3 M286 685.5h3l1 1h3 M500 756.5h3l1 1h3 M421 920.5h3l1 1h3 M1287 899.5h3l1 -1h3 M610 942.5h3l1 -1h3 M937 955.5h3l1 1h3 M954 977.5h3l1 1h3 M302 752.5h3l1 -1h3 M878 976.5h3l1 -1h3 M318 740.5h3l1 1h3 M247 893.5h3l1 -1h3 M1168 850.5h3l1 -1h3 M410 818.5h3l1 -1h3 M116 684.5h3l1 -1h3 M382 796.5h3l1 -1h3 M878 763.5h3l1 1h3 M569 848.5h3l1 1h3 M762 975.5h3l1 1h3 M360 886.5h3l1 1h3 M1152 969.5h3l1 1h3 M1222 876.5h3l1 -1h3 M984 839.5h3l1 -1h3 M851 941.5h3l1 1h3 M980 977.5h3l1 -1h3 M644 819.5h3l1 -1h3 M882 889.5h3l1 1h3 M840 901.5h3l1 1h3 M1156 922.5h3l1 1h3 M1210 834.5h3l1 1h3 M937 899.5h3l1 -1h3 M842 861.5h3l1 1h3 M233 692.5h3l1 -1h3 M981 890.5h3l1 -1h3 M469 779.5h3l1 1h3 M1133 806.5h3l1 -1h3 M325 916.5h3l1 1h3 M435 814.5h3l1 -1h3 M1003 852.5h3l1 -1h3 M150 747.5h3l1 1h3 M151 913.5h3l1 -1h3 M244 731.5h3l1 1h3 M966 947.5h3l1 -1h3 M520 764.5h3l1 -1h3 M328 920.5h3l1 1h3 M1043 964.5h3l1 -1h3 M500 861.5h3l1 -1h3 M824 980.5h3l1 -1h3 M392 945.5h3l1 1h3 M783 921.5h3l1 1h3 M1001 916.5h3l1 1h3 M255 839.5h3l1 1h3 M652 895.5h3l1 1h3 M737 976.5h3l1 -1h3 M180 918.5h3l1 -1h3 M70 769.5h3l1 1h3 M106 832.5h3l1 -1h3 M423 948.5h3l1 -1h3 M179 940.5h3l1 -1h3 M1204 935.5h3l1 -1h3 M449 930.5h3l1 -1h3 M1119 879.5h3l1 -1h3 M632 755.5h3l1 1h3 M106 719.5h3l1 1h3 M648 908.5h3l1 -1h3 M551 891.5h3l1 1h3 M605 922.5h3l1 1h3 M239 954.5h3l1 -1h3 M479 809.5h3l1 -1h3 M8 711.5h3l1 -1h3 M191 812.5h3l1 1h3 M276 729.5h3l1 1h3 M223 677.5h3l1 1h3 M223 824.5h3l1 1h3 M34 796.5h3l1 1h3 M915 778.5h3l1 1h3 M518 718.5h3l1 -1h3 M288 707.5h3l1 1h3 M218 866.5h3l1 1h3 M165 677.5h3l1 -1h3 M361 922.5h3l1 1h3 M1211 862.5h3l1 1h3 M349 930.5h3l1 -1h3 M451 728.5h3l1 -1h3 M1258 916.5h3l1 1h3 M44 674.5h3l1 1h3 M52 663.5h3l1 -1h3 M1169 840.5h3l1 -1h3 M622 934.5h3l1 -1h3 M1221 817.5h3l1 1h3 M790 973.5h3l1 1h3 M384 941.5h3l1 1h3 M509 802.5h3l1 -1h3 M1206 839.5h3l1 -1h3 M954 951.5h3l1 -1h3 M1199 872.5h3l1 1h3" stroke="#111" stroke-width="1.1" fill="none"/>
<!-- column -->
<path d="M672.5 200 V854 Q729 866 786.5 854 V200 Z" fill="url(#colg)"/>
<path d="M672.5 200 V854 Q729 866 786.5 854 V200" fill="none" stroke="#000" stroke-width="1.2"/>
<path d="M674 223h3l2 1 M678 258l3.5 11 M769 288l4 9.5 M769.5 306l-4 11 M679 332l-3 10 M732 458.5h13 M775 458l5 10 M762 478l-6 10 M754 565l5.5 10 M781 580l-4 11 M690 610l-5 10 M675 683h3 M726 669l6.5 11.5 M732 764.5h13 M683 780l-3.5 9 M675 836.5h3 M737 842l5 9.5" stroke="#111" stroke-width="1.1" fill="none"/>
<!-- wheel behind -->
<ellipse cx="817" cy="842" rx="30" ry="25" fill="#000" stroke="#1B2A78" stroke-width="2"/>
<!-- handle -->
<path d="M888 612 L876 514 Q872 472 901 470 L957 477 Q984 482 972 514 L910 606 Q901 616 899 632 L868 862" fill="none" stroke="#1B2A78" stroke-width="14" stroke-linejoin="round"/>
<path d="M888 612 L876 514 Q872 472 901 470 L957 477 Q984 482 972 514 L910 606 Q901 616 899 632 L868 862" fill="none" stroke="#FF0000" stroke-width="10" stroke-linejoin="round"/>
<!-- body -->
<linearGradient id="bodyg2" gradientUnits="userSpaceOnUse" x1="772" y1="718" x2="892" y2="733">
<stop offset="0" stop-color="#E00000"/><stop offset="0.1" stop-color="#FF0000"/><stop offset="0.58" stop-color="#FF0000"/><stop offset="0.75" stop-color="#C80000"/><stop offset="0.9" stop-color="#860000"/><stop offset="1" stop-color="#9A0000"/>
</linearGradient>
<path d="M792 608 Q803 580 834 580 Q866 582 882 598 L896 616 L865 860 L762 846 Z" fill="url(#bodyg2)" stroke="#1B2A78" stroke-width="1.8"/>
<path d="M880 626 L850 856" stroke="#3A2A80" stroke-width="1.1" fill="none"/>
<!-- foot -->
<path d="M771 851 L796 854 L790 882 L765 877 Z" fill="#FF0000" stroke="#1B2A78" stroke-width="1.6"/>
<!-- wheel outline on body -->
<ellipse cx="818" cy="826" rx="33" ry="36" fill="none" stroke="#6A2A78" stroke-width="1.3"/>
<ellipse cx="810" cy="828" rx="6" ry="9" fill="none" stroke="#6A2A78" stroke-width="1.6"/>
<path d="M818 826 L905 841 M818 831 L905 847" stroke="#3A2A80" stroke-width="1.4"/>
<!-- big wheel -->
<ellipse cx="901" cy="841" rx="34" ry="38" fill="#000" stroke="#1B2A78" stroke-width="2.2"/>
<ellipse cx="907" cy="841" rx="7" ry="9" fill="#FF0000" stroke="#1B2A78" stroke-width="1.6"/>
<!-- hose -->
<path d="M851 573 C828 569 805 575 791 591 C772 615 756 660 752 700 C749 735 768 753 794 752 C836 747 861 690 873 630 C878 604 878 592 866 579" fill="none" stroke="#1B2A78" stroke-width="9"/>
<path d="M851 573 C828 569 805 575 791 591 C772 615 756 660 752 700 C749 735 768 753 794 752 C836 747 861 690 873 630 C878 604 878 592 866 579" fill="none" stroke="#050510" stroke-width="5"/>
<!-- valve -->
<path d="M850 566 L868 549" stroke="#1B2A78" stroke-width="6"/>
<path d="M850 566 L868 549" stroke="#7A4A90" stroke-width="3.5"/>
<rect x="845" y="564" width="10" height="10" fill="#8A8A78" stroke="#2A2A5A" stroke-width="1"/>
<!-- view cube -->
<ellipse cx="1208" cy="320" rx="66" ry="12.5" fill="none" stroke="#D4D4D4" stroke-width="2.2" stroke-dasharray="3 1.5"/>
<ellipse cx="1208" cy="321" rx="50" ry="8" fill="#F3F3F3"/>
<path d="M1174 266 L1204 268 L1204 319 L1175 308 Z" fill="#EAEAEA" stroke="#A0A0A0" stroke-width="1"/>
<path d="M1204 268 L1241 266 L1241 308 L1204 319 Z" fill="#E8E8E8" stroke="#A0A0A0" stroke-width="1"/>
<path d="M1174 266 L1210 263 L1241 266 L1204 268 Z" fill="#F4F4F4" stroke="#B8B8B8" stroke-width="1"/>
<rect x="1198" y="280" width="5" height="30" fill="#DADADA"/>
<text x="1176" y="297" font-size="9" fill="#8A8A8A" font-family="Liberation Sans" textLength="26" lengthAdjust="spacingAndGlyphs">DERECHA</text>
<text x="1206" y="297" font-size="9" fill="#8A8A8A" font-family="Liberation Sans" textLength="34" lengthAdjust="spacingAndGlyphs">POSTERIOR</text>
<!-- nav bar -->
<rect x="1263" y="372" width="34" height="116" rx="4" fill="#F5F5F5" stroke="#A0A0A0" stroke-width="1.3"/>
<circle cx="1290" cy="378" r="3.8" fill="#E4E4E4" stroke="#A8A8A8"/>
<path d="M1288 376 l4 4 M1292 376 l-4 4" stroke="#A0A0A0" stroke-width="1"/>
<circle cx="1290" cy="481" r="3.8" fill="#E4E4E4" stroke="#A8A8A8"/>
<path d="M1288 481 h4" stroke="#A0A0A0" stroke-width="1.2"/>
<path d="M1277 393 h4 q4 0 4 4 v4 l-5 5 h-3 q-8 0 -8 -8 q0 -5 8 -5 Z" fill="#EAEAEA" stroke="#9A9A9A" stroke-width="1.2"/>
<circle cx="1277" cy="401" r="3.5" fill="#F4F4F4" stroke="#9A9A9A" stroke-width="1.1"/>
<path d="M1281 405 l3 -2 h5 v6 l-2 3 h-6 Z" fill="#A8CCF0" stroke="#5A8ACB" stroke-width="1"/>
<path d="M1275 423 l3 3 l3 -3 Z M1275 465 l3 3 l3 -3 Z" fill="#666"/>
<line x1="1267" y1="430.5" x2="1293" y2="430.5" stroke="#D0D0D0"/>
<rect x="1272" y="439" width="10" height="9" fill="#A8CC90" stroke="#8AB878" stroke-width="0.8"/>
<circle cx="1283" cy="449" r="3.2" fill="#F4F4F4" stroke="#707070" stroke-width="1.1"/>
<path d="M1285 451.5 l3 3" stroke="#707070" stroke-width="1.4"/>
</g>
<!-- tooltip -->
<rect x="907" y="695" width="304" height="19" fill="#9A9A9A" opacity="0.5"/>
<rect x="904.5" y="692.5" width="304" height="19" fill="#fff" stroke="#7A7A7A"/>
<text x="910" y="706" font-size="12" fill="#575757" font-family="Liberation Sans" textLength="291">Modelos genéricos : Extintor de carro : Tipo A - de agua</text>
</svg>
<!-- VIEW CONTROL BAR -->
<div class="t" style="left:30px;top:988px">1 : 100</div>
<svg width="1310" height="20" style="left:0;top:984px">
<rect x="84.5" y="3.5" width="15" height="11" rx="1" fill="#fff" stroke="#444" stroke-width="1.3"/>
<path d="M85 5 h4 M94.5 5 h4.5" stroke="#444" stroke-width="2"/>
<rect x="89" y="7.5" width="6" height="3.5" fill="#666"/>
<path d="M85 12.5 h4 M95 12.5 h4" stroke="#999" stroke-width="2"/>
<path d="M106.5 8.5 l4 -4 h10 v7 l-4 4 h-10 Z" fill="#A8D4F4" stroke="#3A7ACB" stroke-width="1.3"/>
<path d="M106.5 8.5 h10 l4 -4 M116.5 8.5 v7" stroke="#3A7ACB" stroke-width="1.2" fill="none"/>
<circle cx="131" cy="8" r="3.5" fill="#F4D040" stroke="#E0A020"/>
<path d="M126 3 l2 2 M131 1 v2 M136 3 l-2 2 M125 8 h2" stroke="#E0A020" stroke-width="1"/>
<path d="M134 10 l6 6 M140 10 l-6 6 M154 10 l6 6 M160 10 l-6 6 M193 10 l6 6 M199 10 l-6 6" stroke="#E02020" stroke-width="1.8"/>
<circle cx="153" cy="7" r="4" fill="none" stroke="#3A7ACB" stroke-width="1.3"/>
<path d="M148 13 h8" stroke="#444" stroke-width="2"/>
<path d="M168 6 l6 -2 l6 2 l-1 6 h-10 Z" fill="#fff" stroke="#555" stroke-width="1.2"/>
<circle cx="178" cy="10" r="3" fill="#C8E0F8" stroke="#3A7ACB"/>
<path d="M189 8 h3 M192 5 v10 M192 5 h8 v3" stroke="#3A7ACB" stroke-width="1.3" fill="none"/>
<path d="M209 8 h3 M212 5 v10 M212 5 h8 v3" stroke="#3A7ACB" stroke-width="1.3" fill="none"/>
<circle cx="222" cy="9" r="3" fill="#C8E0F8" stroke="#3A7ACB"/>
<path d="M231 9 l6 -5 l7 5 v7 h-13 Z" fill="#fff" stroke="#444" stroke-width="1.2"/>
<rect x="238" y="11" width="6" height="5" fill="#40A080"/>
<path d="M252 9 q3 -4 6 0 q3 4 6 0 q2 -3 3 0" fill="none" stroke="#444" stroke-width="1.4"/>
<circle cx="280" cy="9" r="3" fill="#C8E0F8" stroke="#3A7ACB"/>
<rect x="294.5" y="4.5" width="13" height="10" fill="#fff" stroke="#333" stroke-width="1.3" stroke-dasharray="3 1"/>
<circle cx="301" cy="10" r="2" fill="none" stroke="#333" stroke-width="1.2"/>
<path d="M314 15 v-8 l5 -3 l7 2 v9 M317 8 v7 M320 7 v8 M323 7 v8" stroke="#A03030" stroke-width="1.1" fill="none"/>
<circle cx="326" cy="8" r="3" fill="#F4D040"/>
<path d="M336 7 l4 -3 h9 v8 l-4 3 h-9 Z M336 7 h9 l4 -3 M345 7 v8" fill="#EEE" stroke="#555" stroke-width="1.2"/>
<path d="M357 3 v12 M371 3 v12 M357 5 h14" stroke="#444" stroke-width="1.2" stroke-dasharray="2 1"/>
<rect x="364" y="10" width="6" height="5" fill="#888"/>
<path d="M386 5 l-4 4 l4 4" stroke="#333" stroke-width="1.6" fill="none"/>
<rect x="828" y="3" width="17" height="14" fill="#CDCDCD"/>
<path d="M1287 5 l4 4 l-4 4" stroke="#333" stroke-width="1.6" fill="none"/>
</svg>
<!-- PROPERTIES -->
<div class="t" style="left:1323px;top:182px">Propiedades</div>
<svg width="20" height="20" style="left:1667px;top:180px"><path d="M3 4 l10 10 M13 4 l-10 10" stroke="#111" stroke-width="1.7"/></svg>
<div class="a" style="left:1321px;top:198px;width:362px;height:72px;background:#F0F0F0;border:1px solid #D8D8D8"></div>
<div class="a" style="left:1324px;top:201px;width:66px;height:66px;background:#fff;border:1px solid #D0D0D0"></div>
<div class="t" style="left:1394px;top:220px;color:#333">Extintor de carro</div>
<div class="t" style="left:1394px;top:236px;color:#333">Tipo A - de agua</div>
<svg width="10" height="10" style="left:1672px;top:231px"><path d="M0 0 h8 l-4 4 Z" fill="#444"/></svg>
<svg width="66" height="66" style="left:1324px;top:201px">
<path d="M16 14 L31 22" stroke="#D00000" stroke-width="2.6" fill="none" stroke-linecap="round"/>
<path d="M16 14 L24 42" stroke="#C00000" stroke-width="2.2" fill="none" stroke-linecap="round"/>
<path d="M29 23 Q37 21 42 25 L46 48 Q44 55 37 55 L31 46 Z" fill="#E00000"/>
<path d="M33 24 L36 54" stroke="#A00000" stroke-width="1.5"/>
<path d="M42 26 l5 10 l-2 2" stroke="#444" stroke-width="1.3" fill="none"/>
<path d="M31 21 l2 -3" stroke="#444" stroke-width="1.2"/>
<ellipse cx="25.5" cy="46" rx="4" ry="4.5" fill="#111"/>
<ellipse cx="38" cy="53" rx="4" ry="4.5" fill="#111"/>
</svg>
<div class="a" style="left:1321px;top:271px;width:273px;height:23px;background:#E6E6E6;border:1px solid #C8C8C8"></div>
<div class="t" style="left:1325px;top:275px">Modelos genéricos (1)</div>
<svg width="14" height="10" style="left:1578px;top:278px"><path d="M1 2 l5 5 l5 -5" stroke="#555" stroke-width="1.3" fill="none"/></svg>
<svg width="18" height="18" style="left:1599px;top:272px"><path d="M1.5 1.5 h6 v6 h-6 Z M9.5 1.5 h6 v4 M1.5 9.5 h6 v6 h-6 Z" fill="#fff" stroke="#444" stroke-width="1.1"/><rect x="9.5" y="6.5" width="7" height="10" fill="#fff" stroke="#444" stroke-width="1.1"/><path d="M11 10 h4 M11 13 h4" stroke="#3A7ACB" stroke-width="1.1"/></svg>
<div class="t" style="left:1621px;top:274px;color:#222">Editar tipo</div>
<div class="a" style="left:1321px;top:295px;width:362px;height:682px;background:#fff"></div>
<div class="a" style="left:1321px;top:295px;width:362px;height:18px;background:#DADADA"></div>
<div class="t" style="left:1323px;top:297px;color:#222">Restricciones</div>
<div class="t" style="left:1329px;top:315px;color:#222">Nivel</div>
<div class="t" style="left:1499px;top:315px;color:#222">03 - Floor</div>
<div class="t" style="left:1329px;top:333px;color:#222">Elevación desde el nivel</div>
<div class="t" style="left:1499px;top:333px;color:#222">0.0</div>
<div class="t" style="left:1329px;top:351px;color:#8A8A8A">Anfitrión</div>
<div class="t" style="left:1499px;top:351px;color:#8A8A8A">Suelo : Hollow Core Plank - C...</div>
<div class="t" style="left:1329px;top:369px;color:#222">Desfase desde el anfitrión</div>
<div class="t" style="left:1499px;top:369px;color:#222">0.0</div>
<div class="t" style="left:1329px;top:387px;color:#222">Se mueve con elementos cerc...</div>
<div class="a" style="left:1321px;top:403px;width:362px;height:18px;background:#DADADA"></div>
<div class="t" style="left:1323px;top:405px;color:#222">Cotas</div>
<div class="t" style="left:1329px;top:423px;color:#8A8A8A">Volumen</div>
<div class="t" style="left:1499px;top:423px;color:#8A8A8A">0.047 m³</div>
<div class="a" style="left:1321px;top:439px;width:362px;height:18px;background:#DADADA"></div>
<div class="t" style="left:1323px;top:441px;color:#222">Datos de identidad</div>
<div class="t" style="left:1329px;top:459px;color:#8A8A8A">U_Copyright ©</div>
<div class="t" style="left:1499px;top:459px;color:#8A8A8A">UrbiCAD Architecture S.L. ©</div>
<div class="t" style="left:1329px;top:477px;color:#222">Imagen</div>
<div class="t" style="left:1329px;top:495px;color:#222">Comentarios</div>
<div class="t" style="left:1329px;top:513px;color:#222">Marca</div>
<div class="a" style="left:1321px;top:529px;width:362px;height:18px;background:#DADADA"></div>
<div class="t" style="left:1323px;top:531px;color:#222">Proceso por fases</div>
<div class="t" style="left:1329px;top:549px;color:#222">Fase de creación</div>
<div class="t" style="left:1499px;top:549px;color:#222">New Construction</div>
<div class="t" style="left:1329px;top:567px;color:#222">Fase de derribo</div>
<div class="t" style="left:1499px;top:567px;color:#222">Ninguno</div>
<div class="a" style="left:1321px;top:583px;width:362px;height:18px;background:#DADADA"></div>
<div class="t" style="left:1323px;top:585px;color:#222">Datos</div>
<div class="t" style="left:1329px;top:603px;color:#222">U_Información adicional</div>
<div class="t" style="left:1499px;top:603px;color:#222">Agente extintor: Agua; Para fu...</div>
<svg width="370" height="340" style="left:1318px;top:290px">
<path d="M352 11 l3 -3 l3 3 M352 15 l3 -3 l3 3" stroke="#222" stroke-width="1.4" fill="none"/>
<path d="M3 40.5 h362" stroke="#9A9A9A" stroke-width="1" stroke-dasharray="1 1"/>
<path d="M178.5 23 v18 M352.5 23 v18 M364.5 23 v18" stroke="#9A9A9A" stroke-width="1" stroke-dasharray="1 1"/>
<path d="M3 58.5 h362" stroke="#9A9A9A" stroke-width="1" stroke-dasharray="1 1"/>
<path d="M178.5 41 v18 M352.5 41 v18 M364.5 41 v18" stroke="#9A9A9A" stroke-width="1" stroke-dasharray="1 1"/>
<path d="M3 76.5 h362" stroke="#9A9A9A" stroke-width="1" stroke-dasharray="1 1"/>
<path d="M178.5 59 v18 M352.5 59 v18 M364.5 59 v18" stroke="#9A9A9A" stroke-width="1" stroke-dasharray="1 1"/>
<path d="M3 94.5 h362" stroke="#9A9A9A" stroke-width="1" stroke-dasharray="1 1"/>
<path d="M178.5 77 v18 M352.5 77 v18 M364.5 77 v18" stroke="#9A9A9A" stroke-width="1" stroke-dasharray="1 1"/>
<path d="M3 112.5 h362" stroke="#9A9A9A" stroke-width="1" stroke-dasharray="1 1"/>
<path d="M178.5 95 v18 M352.5 95 v18 M364.5 95 v18" stroke="#9A9A9A" stroke-width="1" stroke-dasharray="1 1"/>
<path d="M352 119 l3 -3 l3 3 M352 123 l3 -3 l3 3" stroke="#222" stroke-width="1.4" fill="none"/>
<path d="M3 148.5 h362" stroke="#9A9A9A" stroke-width="1" stroke-dasharray="1 1"/>
<path d="M178.5 131 v18 M352.5 131 v18 M364.5 131 v18" stroke="#9A9A9A" stroke-width="1" stroke-dasharray="1 1"/>
<path d="M352 155 l3 -3 l3 3 M352 159 l3 -3 l3 3" stroke="#222" stroke-width="1.4" fill="none"/>
<path d="M3 184.5 h362" stroke="#9A9A9A" stroke-width="1" stroke-dasharray="1 1"/>
<path d="M178.5 167 v18 M352.5 167 v18 M364.5 167 v18" stroke="#9A9A9A" stroke-width="1" stroke-dasharray="1 1"/>
<path d="M3 202.5 h362" stroke="#9A9A9A" stroke-width="1" stroke-dasharray="1 1"/>
<path d="M178.5 185 v18 M352.5 185 v18 M364.5 185 v18" stroke="#9A9A9A" stroke-width="1" stroke-dasharray="1 1"/>
<path d="M3 220.5 h362" stroke="#9A9A9A" stroke-width="1" stroke-dasharray="1 1"/>
<path d="M178.5 203 v18 M352.5 203 v18 M364.5 203 v18" stroke="#9A9A9A" stroke-width="1" stroke-dasharray="1 1"/>
<path d="M3 238.5 h362" stroke="#9A9A9A" stroke-width="1" stroke-dasharray="1 1"/>
<path d="M178.5 221 v18 M352.5 221 v18 M364.5 221 v18" stroke="#9A9A9A" stroke-width="1" stroke-dasharray="1 1"/>
<path d="M352 245 l3 -3 l3 3 M352 249 l3 -3 l3 3" stroke="#222" stroke-width="1.4" fill="none"/>
<path d="M3 274.5 h362" stroke="#9A9A9A" stroke-width="1" stroke-dasharray="1 1"/>
<path d="M178.5 257 v18 M352.5 257 v18 M364.5 257 v18" stroke="#9A9A9A" stroke-width="1" stroke-dasharray="1 1"/>
<path d="M3 292.5 h362" stroke="#9A9A9A" stroke-width="1" stroke-dasharray="1 1"/>
<path d="M178.5 275 v18 M352.5 275 v18 M364.5 275 v18" stroke="#9A9A9A" stroke-width="1" stroke-dasharray="1 1"/>
<path d="M352 299 l3 -3 l3 3 M352 303 l3 -3 l3 3" stroke="#222" stroke-width="1.4" fill="none"/>
<path d="M3 328.5 h362" stroke="#9A9A9A" stroke-width="1" stroke-dasharray="1 1"/>
<path d="M178.5 311 v18 M352.5 311 v18 M364.5 311 v18" stroke="#9A9A9A" stroke-width="1" stroke-dasharray="1 1"/>
</svg>
<div class="a" style="left:1496px;top:313px;width:174px;height:17px;border:1.5px solid #111;background:transparent"></div>
<div class="a" style="left:1500px;top:388px;width:13px;height:13px;background:#fff;border:1px solid #333"></div>
<div class="a" style="left:1672px;top:602px;width:10px;height:15px;background:#EEE;border:1px solid #999"></div>
<div class="t" style="left:1323px;top:983px;color:#1E6EC7;text-decoration:underline">Ayuda de propiedades</div>
<div class="a" style="left:1608px;top:980px;width:73px;height:21px;background:#CCCCCC;border:1px solid #BDBDBD"></div>
<div class="t" style="left:1626px;top:984px;color:#8C8C8C">Aplicar</div>
<div class="a" style="left:1315px;top:178px;width:3px;height:827px;background:#CFCFCF"></div>
<!-- STATUS BAR -->
<div class="t" style="left:5px;top:1011px">Modelos genéricos : Extintor de carro : Tipo A - de agua</div>
<svg width="1687" height="28" style="left:0;top:1004px">
<path d="M637 10 l5 -3 l5 3 v9 l-5 3 l-5 -3 Z" fill="#A8D4F4" stroke="#3A7ACB" stroke-width="1.2"/>
<path d="M642 7 l4 -3 l4 2 v4 l-4 2" fill="#6AC060" stroke="#2E8A20" stroke-width="1"/>
<path d="M650 12 v10 M648 12 h4" stroke="#3A7ACB" stroke-width="1.5"/>
</svg>
<div class="a" style="left:661px;top:1008px;width:204px;height:19px;background:#fff;border:1px solid #E0E0E0"></div>
<svg width="1687" height="28" style="left:0;top:1004px">
<path d="M850 11 l5 5 l5 -5" stroke="#777" stroke-width="1.1" fill="none"/>
<path d="M848 5 v18" stroke="#E8E8E8"/>
<path d="M876 20 l5 -9 h6 l2 -4 h-8 l-3 4" fill="#A8A8A8" stroke="#A8A8A8" stroke-width="1.2"/>
<path d="M883 11 v11" stroke="#A8A8A8" stroke-width="2"/>
<rect x="927.5" y="7.5" width="14" height="14" fill="#fff" stroke="#333" stroke-width="1.3"/>
<path d="M928 11 h13 M930 14 h2 M933 14 h6 M930 17 h2 M933 17 h6" stroke="#333" stroke-width="1.2"/>
<rect x="952" y="7" width="14" height="14" fill="#A8A8A8"/>
<path d="M955 15 h6 l-2 -2 M961 15 l-2 2" stroke="#fff" stroke-width="1.3" fill="none"/>
</svg>
<div class="t" style="left:893px;top:1011px">:0</div>
<div class="a" style="left:976px;top:1008px;width:206px;height:19px;background:#fff;border:1px solid #E0E0E0"></div>
<div class="t" style="left:980px;top:1011px;color:#555">Modelo base</div>
<svg width="1687" height="28" style="left:0;top:1004px">
<path d="M1168 11 l5 5 l5 -5" stroke="#777" stroke-width="1.1" fill="none"/>
<path d="M1161 5 v18" stroke="#E8E8E8"/>
<!-- right icons -->
<path d="M1412 9 q4 -4 8 0 q4 -4 8 0 q-4 4 -8 0 q-4 4 -8 0" fill="#F0C030" stroke="#A07010" stroke-width="1"/>
<path d="M1419 10 v11 l2.5 -2.5 l2 4 l1.5 -1 l-2 -4 h3.5 Z" fill="#fff" stroke="#222" stroke-width="0.9"/>
<path d="M1438 18 l6 -8 h6 M1438 21 h8 M1438 18 h8" stroke="#3A7ACB" stroke-width="1.4" fill="none"/>
<path d="M1446 6 l5 5 M1451 6 l-5 5" stroke="#E02020" stroke-width="1.8"/>
<path d="M1446 13 v10 l2.5 -2.5 l2 4 l1.5 -1 l-2 -4 h3.5 Z" fill="#fff" stroke="#222" stroke-width="0.9"/>
<path d="M1465 8 h9 v5 h-9 Z M1469 13 v11" fill="#F0A040" stroke="#C06010" stroke-width="1.3"/>
<path d="M1475 13 v10 l2.5 -2.5 l2 4 l1.5 -1 l-2 -4 h3.5 Z" fill="#fff" stroke="#222" stroke-width="0.9"/>
<path d="M1491 10 l7 -3 v14 l-7 2 Z" fill="none" stroke="#3A7ACB" stroke-width="1.5"/>
<path d="M1497 13 v10 l2.5 -2.5 l2 4 l1.5 -1 l-2 -4 h3.5 Z" fill="#fff" stroke="#222" stroke-width="0.9"/>
<path d="M1520 8 v10 M1515 13 h10 M1520 8 l-2 2 M1520 8 l2 2" stroke="#222" stroke-width="1.3" fill="none"/>
<path d="M1523 13 v10 l2.5 -2.5 l2 4 l1.5 -1 l-2 -4 h3.5 Z" fill="#fff" stroke="#222" stroke-width="0.9"/>
<circle cx="1549" cy="14" r="5.5" fill="none" stroke="#BBBBBB" stroke-width="2.5" stroke-dasharray="2 1.5"/>
<path d="M1565 8 h15 l-6 8 v6 h-3 v-6 Z" fill="#E4E8EC" stroke="#333" stroke-width="1.3" stroke-linejoin="round"/>
<path d="M1657.5 7 v20 M1665.5 7 v20" stroke="#DCDCDC"/>
</svg>
<div class="t" style="left:1581px;top:1012px;color:#333">:1</div>
</body></html>
